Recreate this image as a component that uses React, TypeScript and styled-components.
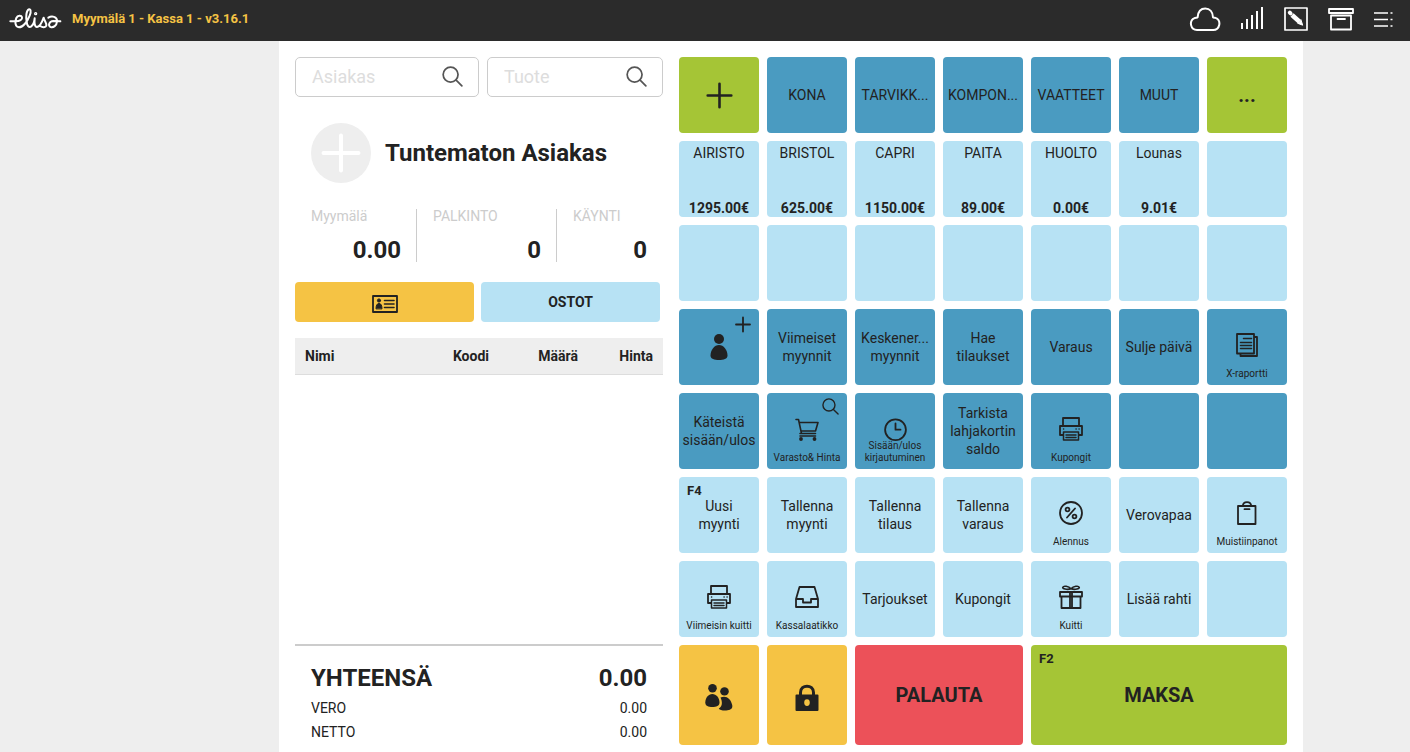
import React from "react";
import styled, { createGlobalStyle, css } from "styled-components";

const colors = {
  ink: "#222222",
  green: "#a5c536",
  blue: "#4a9bc1",
  sky: "#b7e2f4",
  yellow: "#f5c344",
  red: "#ec5159",
  bar: "#2b2b2b",
  page: "#eeeeee",
  line: "#cccccc",
};

const GlobalStyle = createGlobalStyle`
  *, *::before, *::after { box-sizing: border-box; }
  body {
    margin: 0;
    background: ${colors.page};
    color: ${colors.ink};
    font-family: Roboto, "Liberation Sans", sans-serif;
    font-size: 14px;
    line-height: 18px;
  }
  button, input { font: inherit; color: inherit; }
  button { border: 0; padding: 0; cursor: pointer; background: none; }
  svg { display: block; flex: none; }
`;

/* ---------- icons ---------- */

type IconProps = { w?: number; h?: number; box: string; sw?: number; children: React.ReactNode };

const Icon = ({ w = 24, h = 24, box, sw = 2, children }: IconProps) => (
  <svg
    width={w}
    height={h}
    viewBox={box}
    fill="none"
    stroke="currentColor"
    strokeWidth={sw}
    strokeLinecap="round"
    strokeLinejoin="round"
    aria-hidden="true"
  >
    {children}
  </svg>
);

const Logo = () => (
  <svg width="53" height="23" viewBox="28 16 159 69" fill="none" stroke="#fff" strokeWidth="6" strokeLinecap="round" strokeLinejoin="round" role="img" aria-label="elisa">
    <path d="M32 59H48C60 59 69 54 67 47C65 40 54 41 50 49C45 60 46 76 58 77C70 77 83 60 90 42C96 27 92 21 87 23C80 27 78 45 81 60C82 73 88 79 95 74C101 69 104 60 105 50C104 62 104 76 112 76C121 75 127 62 132 48C134 58 142 65 140 72C138 78 128 78 123 74" />
    <path d="M146 48C156 42 173 44 172 59C171 73 161 78 153 76C144 73 148 59 161 58L182 59" />
    <circle cx="108" cy="36" r="2" />
  </svg>
);

const CloudIcon = () => (
  <Icon w={32} h={24} box="0 0 32 24">
    <path d="M8 23h16a6.300 6.300 0 0 0 2.500-12.100C26 10.500 24.400 11 24 10.300C23.800 5 20.800 1.500 16.300 1.500S9 5 8.600 10.300C8.200 11 6.500 10.600 5.500 11.200A6.200 6.200 0 0 0 8 23z" />
  </Icon>
);

const SignalIcon = () => (
  <Icon w={23} h={24} box="0 1 23 24">
    <path strokeLinecap="butt" d="M1 23v-6M6 23v-10M11 23V9M16 23V5M21 23V1" />
  </Icon>
);

const EditIcon = () => (
  <Icon box="0 0 24 24">
    <rect x="1" y="1" width="22" height="22" strokeWidth="1.700" />
    <path d="M5.800 5.600l.8.8" strokeWidth="4" />
    <path d="M8 8l7.500 6.700" strokeWidth="4.600" strokeLinecap="butt" />
    <path d="M14 16.400l4.700 1.800l-1.700-5.200z" fill="currentColor" strokeWidth="1" />
  </Icon>
);

const ArchiveIcon = () => (
  <Icon w={26} box="0 0 26 24" sw={1.8}>
    <path d="M1 2h24v4H1zM3 8.500h20V22.500H3zM9.500 12h7.500" />
  </Icon>
);

const MenuIcon = () => (
  <Icon w={19} h={16} box="0 0 19 16" sw={1.6}>
    <path strokeLinecap="butt" d="M0 2h14M0 8.500h14M0 15h14M16.500 2h2M16.500 8.500h2M16.500 15h2" />
  </Icon>
);

const SearchIcon = ({ size = 21, sw = 1.8 }: { size?: number; sw?: number }) => (
  <Icon w={size} h={size} box="0 0 22 22" sw={sw}>
    <circle cx="9" cy="9" r="7.800" />
    <path d="M14.800 14.800L20.800 20.800" />
  </Icon>
);

const PlusIcon = ({ size, sw }: { size: number; sw: number }) => (
  <Icon w={size} h={size} box="0 0 24 24" sw={sw}>
    <path d="M12 1.500v21M1.500 12h21" />
  </Icon>
);

const CornerPlusIcon = () => (
  <Icon w={16} h={20} box="0 0 16 20" sw={1.8}>
    <path d="M8 3.500v14M1 10.500h14" />
  </Icon>
);

const CardIcon = () => (
  <Icon w={26} h={22} box="0 -4 26 22" sw={1.8}>
    <rect x="1" y="1" width="24" height="16" />
    <circle cx="7" cy="5.500" r="1.600" fill="currentColor" strokeWidth="1" />
    <path d="M4 13.500c0-3 1-5 3-5s3 2 3 5z" fill="currentColor" strokeWidth="1" />
    <path d="M12.500 5.500h9.500M12.500 9h9.500M12.500 12.500h9.500" strokeWidth="1.600" />
  </Icon>
);

const PersonIcon = () => (
  <Icon w={20} h={28} box="0 0 20 28" sw={0}>
    <circle cx="10" cy="6" r="5" fill="currentColor" />
    <path d="M10 12c4.500 0 8.500 5 8.500 10.500c0 3.500-4 4.500-8.500 4.500s-8.500-1-8.500-4.500C1.500 17 5.500 12 10 12z" fill="currentColor" />
  </Icon>
);

const PeopleIcon = () => (
  <Icon w={28} h={32} box="0 -5 28 32" sw={0}>
    <g fill="currentColor">
      <ellipse cx="7.500" cy="4.200" rx="4.300" ry="4.200" />
      <ellipse cx="19.500" cy="7.400" rx="4.300" ry="4.200" />
      <path d="M7.300 10c4 0 7.200 4 7.200 8.500c0 3.500-3.200 4.500-7.200 4.500S.3 22 .3 18.500C.3 14 3.500 10 7.300 10z" />
      <path d="M15.500 13.600c5-2.500 10.200.5 11.700 7.400c1 4.500-3.400 5.500-7.200 5.500c-3 0-5.500-.5-6.200-2c3.400-1.500 4-6 1.700-10.900z" />
    </g>
  </Icon>
);

const LockIcon = () => (
  <Icon w={26} h={32} box="0 -5 26 32" sw={3}>
    <path d="M6.500 12V8.500C6.500 0 19.500 0 19.500 8.500V12" />
    <path d="M2.500 10.500h21q1 0 1 1V26q0 1-1 1h-21q-1 0-1-1V11.500q0-1 1-1zM13 15.200a2.800 3.400 0 1 0 0 6.800a2.800 3.400 0 1 0 0-6.800z" fill="currentColor" fillRule="evenodd" stroke="none" />
  </Icon>
);

const CartIcon = () => (
  <Icon box="0 -1 24 24">
    <path d="M1 1.500h2.500L6.500 15.500M4.300 4.500h18.700l-2.500 8.500H6M5 15.500h15.500M5 18h15.500" strokeWidth="1.600" />
    <circle cx="6" cy="21" r=".9" />
    <circle cx="19.500" cy="21" r=".9" />
  </Icon>
);

const ClockIcon = () => (
  <Icon box="0 0 24 24" sw={1.8}>
    <circle cx="12.500" cy="12.700" r="10.400" />
    <path d="M12.500 6.500v6.200h5" />
  </Icon>
);

const PrinterIcon = () => (
  <Icon box="0 0 24 24" sw={1.8}>
    <path d="M4 9V1h16v8M4 18H1V9h22v9h-3" />
    <path d="M4.500 15h15v8h-15zM7 18h10M7 20.500h10" strokeWidth="1.500" />
    <path d="M4.500 12h.2M17 12h.2M20 12h.2" strokeWidth="1.400" />
  </Icon>
);

const ReportIcon = () => (
  <Icon box="0 0 24 24" sw={1.8}>
    <path d="M2 1h17v19.500H2zM5.500 20.500v2.500h16.500V4h-3" />
    <path d="M8.500 5.500h8M5.500 9.500h11M5.500 12.500h11M5.500 15.500h11" strokeWidth="1.500" />
  </Icon>
);

const PercentIcon = () => (
  <Icon box="0 0 24 24" sw={1.8}>
    <circle cx="12" cy="12" r="11" />
    <circle cx="8.500" cy="8.500" r="1.900" />
    <circle cx="15.500" cy="15.500" r="1.900" />
    <path d="M16 7.500L8 16.500" />
  </Icon>
);

const BagIcon = () => (
  <Icon box="0 0 24 24" sw={1.8}>
    <path d="M3 5h17.500v18H3zM7.800 5C8 -.3 16 -.3 16.200 5M9.500 8.200h5" />
  </Icon>
);

const TrayIcon = () => (
  <Icon box="0 0 24 24" sw={1.8}>
    <path d="M4.500 2h15L23 14v8H1v-8zM1 14h7v3.500h8V14h7" />
  </Icon>
);

const GiftIcon = () => (
  <Icon box="0 0 24 24" sw={1.8}>
    <path d="M1 7h22v4.500H1zM2.500 11.500V23h19V11.500M11 7v16M13 7v16" />
    <path d="M12 3.800C9.500 1 4.500.5 3.800 2.200S8 5 12 3.800zM12 3.800c2.500-2.800 7.500-3.300 8.200-1.600S16 5 12 3.800z" strokeWidth="1.600" />
  </Icon>
);

/* ---------- page frame ---------- */

const TopBar = styled.header`
  display: flex;
  align-items: center;
  height: 41px;
  padding: 0 17px 4px 9px;
  background: ${colors.bar};
  color: #fff;
`;

const StoreTitle = styled.h1`
  margin: 0 0 0 10px;
  flex: 1;
  font-size: 13px;
  line-height: 18px;
  font-weight: 700;
  color: ${colors.yellow};
`;

const BarActions = styled.nav`
  display: flex;
  align-items: center;
  gap: 20px;
`;

const PageGrid = styled.div`
  display: grid;
  grid-template-columns: 279fr minmax(auto, 1024px) 107fr;
  min-height: calc(100vh - 41px);
`;

const Register = styled.main`
  grid-column: 2;
  display: flex;
  gap: 16px;
  padding: 16px 16px 0;
  background: #fff;
`;

/* ---------- receipt column ---------- */

const Receipt = styled.section`
  flex: 1;
  min-width: 0;
  display: flex;
  flex-direction: column;
`;

const SearchRow = styled.div`
  display: grid;
  grid-template-columns: 184fr 176fr;
  gap: 8px;
`;

const SearchBox = styled.label`
  min-width: 0;
  display: flex;
  align-items: center;
  height: 40px;
  padding: 0 15px 2px 16px;
  border: 1px solid ${colors.line};
  border-radius: 5px;
  color: #555;
`;

const SearchInput = styled.input`
  flex: 1;
  min-width: 0;
  width: 0;
  padding: 2px 0 0;
  border: 0;
  outline: 0;
  background: none;
  font-size: 18px;
  line-height: 24px;
  &::placeholder { color: #dddddd; opacity: 1; }
`;

const Customer = styled.div`
  display: flex;
  align-items: center;
  gap: 14px;
  margin-top: 26px;
  padding: 0 16px;
`;

const Avatar = styled.button`
  display: grid;
  place-items: center;
  width: 60px;
  height: 60px;
  border-radius: 50%;
  background: ${colors.page};
  color: #fff;
`;

const CustomerName = styled.h2`
  margin: 0;
  font-size: 24px;
  line-height: 30px;
  font-weight: 700;
`;

const Stats = styled.dl`
  display: grid;
  grid-template-columns: 122fr 140fr 106fr;
  margin: 26px 0 20px;
`;

const Stat = styled.div`
  height: 53px;
  padding: 0 16px;
  & + & { box-shadow: -1px 0 0 ${colors.line}; }
`;

const StatLabel = styled.dt`
  line-height: 14px;
  color: ${colors.line};
`;

const StatValue = styled.dd`
  margin: 12px 0 0;
  font-size: 24px;
  line-height: 30px;
  font-weight: 700;
  text-align: right;
`;

const ButtonRow = styled.div`
  display: flex;
  gap: 7px;
  padding-right: 3px;
`;

const WideButton = styled.button<{ $tone: string }>`
  flex: 1;
  display: grid;
  place-items: center;
  height: 40px;
  border-radius: 4px;
  background: ${(p) => p.$tone};
  font-weight: 700;
`;

const Basket = styled.table`
  width: 100%;
  margin-top: 16px;
  border-collapse: collapse;
`;

const BasketHead = styled.th<{ $width: string; $right?: boolean }>`
  width: ${(p) => p.$width};
  height: 36px;
  padding: 0 10px;
  text-align: ${(p) => (p.$right ? "right" : "left")};
  font-weight: 700;
  background: ${colors.page};
  border-bottom: 1px solid #dddddd;
`;

const Totals = styled.dl`
  margin: auto 0 0;
  padding: 14px 16px 8px;
  border-top: 2px solid ${colors.line};
`;

const TotalRow = styled.div<{ $main?: boolean }>`
  display: flex;
  justify-content: space-between;
  line-height: 24px;
  ${(p) => p.$main && css`
    font-size: 24px;
    line-height: 36px;
    font-weight: 700;
  `}
`;

const Amount = styled.dd`
  margin: 0;
`;

/* ---------- key pad ---------- */

const Keypad = styled.section`
  display: grid;
  grid-template-columns: repeat(7, 80px);
  grid-template-rows: repeat(7, 76px) 100px;
  gap: 8px;
  padding-bottom: 7px;
`;

const Key = styled.button<{ $tone: string; $span?: number; $layout?: "price" | "icon" }>`
  position: relative;
  grid-column: span ${(p) => p.$span ?? 1};
  display: flex;
  flex-direction: column;
  align-items: center;
  justify-content: ${(p) => (p.$layout ? "space-between" : "center")};
  padding: ${(p) => (p.$layout === "price" ? "3px 0 0" : p.$layout === "icon" ? "24px 0 4px" : "0")};
  border-radius: 4px;
  background: ${(p) => p.$tone};
  white-space: pre-line;
  text-align: center;
`;

const Price = styled.strong`
  font-weight: 700;
`;

const Caption = styled.span`
  margin: -1px 0 1px;
  font-size: 10px;
  line-height: 12px;
`;

const BigLabel = styled.span`
  font-size: 20px;
  line-height: 24px;
  font-weight: 700;
`;

const Corner = styled.span`
  position: absolute;
  top: 5px;
  right: 8px;
`;

const Shortcut = styled.kbd`
  position: absolute;
  top: 5px;
  left: 8px;
  font-family: inherit;
  font-size: 13px;
  font-weight: 700;
`;

type KeySpec = {
  tone: string;
  label?: string;
  price?: string;
  icon?: React.ReactNode;
  caption?: string;
  corner?: React.ReactNode;
  shortcut?: string;
  big?: string;
  name?: string;
  span?: number;
};

const { green, blue, sky, yellow, red } = colors;

const keys: KeySpec[] = [
  { tone: green, icon: <PlusIcon size={27} sw={2.3} />, name: "Lisää" },
  { tone: blue, label: "KONA" },
  { tone: blue, label: "TARVIKK..." },
  { tone: blue, label: "KOMPON..." },
  { tone: blue, label: "VAATTEET" },
  { tone: blue, label: "MUUT" },
  { tone: green, big: "..." },

  { tone: sky, label: "AIRISTO", price: "1295.00€" },
  { tone: sky, label: "BRISTOL", price: "625.00€" },
  { tone: sky, label: "CAPRI", price: "1150.00€" },
  { tone: sky, label: "PAITA", price: "89.00€" },
  { tone: sky, label: "HUOLTO", price: "0.00€" },
  { tone: sky, label: "Lounas", price: "9.01€" },
  { tone: sky },

  ...Array.from({ length: 7 }, () => ({ tone: sky })),

  { tone: blue, icon: <PersonIcon />, corner: <CornerPlusIcon />, name: "Uusi asiakas" },
  { tone: blue, label: "Viimeiset\nmyynnit" },
  { tone: blue, label: "Keskener...\nmyynnit" },
  { tone: blue, label: "Hae\ntilaukset" },
  { tone: blue, label: "Varaus" },
  { tone: blue, label: "Sulje päivä" },
  { tone: blue, icon: <ReportIcon />, caption: "X-raportti" },

  { tone: blue, label: "Käteistä\nsisään/ulos" },
  { tone: blue, icon: <CartIcon />, caption: "Varasto& Hinta", corner: <SearchIcon size={17} /> },
  { tone: blue, icon: <ClockIcon />, caption: "Sisään/ulos\nkirjautuminen" },
  { tone: blue, label: "Tarkista\nlahjakortin\nsaldo" },
  { tone: blue, icon: <PrinterIcon />, caption: "Kupongit" },
  { tone: blue },
  { tone: blue },

  { tone: sky, label: "Uusi\nmyynti", shortcut: "F4" },
  { tone: sky, label: "Tallenna\nmyynti" },
  { tone: sky, label: "Tallenna\ntilaus" },
  { tone: sky, label: "Tallenna\nvaraus" },
  { tone: sky, icon: <PercentIcon />, caption: "Alennus" },
  { tone: sky, label: "Verovapaa" },
  { tone: sky, icon: <BagIcon />, caption: "Muistiinpanot" },

  { tone: sky, icon: <PrinterIcon />, caption: "Viimeisin kuitti" },
  { tone: sky, icon: <TrayIcon />, caption: "Kassalaatikko" },
  { tone: sky, label: "Tarjoukset" },
  { tone: sky, label: "Kupongit" },
  { tone: sky, icon: <GiftIcon />, caption: "Kuitti" },
  { tone: sky, label: "Lisää rahti" },
  { tone: sky },

  { tone: yellow, icon: <PeopleIcon />, name: "Asiakkaat" },
  { tone: yellow, icon: <LockIcon />, name: "Lukitse" },
  { tone: red, big: "PALAUTA", span: 2 },
  { tone: green, big: "MAKSA", span: 3, shortcut: "F2" },
];

const KeyButton = ({ spec }: { spec: KeySpec }) => (
  <Key
    type="button"
    aria-label={spec.name}
    $tone={spec.tone}
    $span={spec.span}
    $layout={spec.price ? "price" : spec.caption ? "icon" : undefined}
  >
    {spec.shortcut && <Shortcut>{spec.shortcut}</Shortcut>}
    {spec.corner && <Corner>{spec.corner}</Corner>}
    {spec.icon}
    {spec.label && <span>{spec.label}</span>}
    {spec.big && <BigLabel>{spec.big}</BigLabel>}
    {spec.price && <Price>{spec.price}</Price>}
    {spec.caption && <Caption>{spec.caption}</Caption>}
  </Key>
);

export default function App() {
  return (
    <>
      <GlobalStyle />
      <TopBar>
        <Logo />
        <StoreTitle>Myymälä 1 - Kassa 1 - v3.16.1</StoreTitle>
        <BarActions>
          <button type="button" aria-label="Pilvi"><CloudIcon /></button>
          <button type="button" aria-label="Yhteys"><SignalIcon /></button>
          <button type="button" aria-label="Muokkaa"><EditIcon /></button>
          <button type="button" aria-label="Arkisto"><ArchiveIcon /></button>
          <button type="button" aria-label="Valikko"><MenuIcon /></button>
        </BarActions>
      </TopBar>
      <PageGrid>
        <Register>
          <Receipt>
            <SearchRow>
              <SearchBox>
                <SearchInput type="text" placeholder="Asiakas" aria-label="Asiakas" />
                <SearchIcon />
              </SearchBox>
              <SearchBox>
                <SearchInput type="text" placeholder="Tuote" aria-label="Tuote" />
                <SearchIcon />
              </SearchBox>
            </SearchRow>
            <Customer>
              <Avatar type="button" aria-label="Lisää asiakas"><PlusIcon size={40} sw={2.4} /></Avatar>
              <CustomerName>Tuntematon Asiakas</CustomerName>
            </Customer>
            <Stats>
              <Stat><StatLabel>Myymälä</StatLabel><StatValue>0.00</StatValue></Stat>
              <Stat><StatLabel>PALKINTO</StatLabel><StatValue>0</StatValue></Stat>
              <Stat><StatLabel>KÄYNTI</StatLabel><StatValue>0</StatValue></Stat>
            </Stats>
            <ButtonRow>
              <WideButton type="button" aria-label="Asiakaskortti" $tone={yellow}><CardIcon /></WideButton>
              <WideButton type="button" $tone={sky}>OSTOT</WideButton>
            </ButtonRow>
            <Basket>
              <thead>
                <tr>
                  <BasketHead $width="auto">Nimi</BasketHead>
                  <BasketHead $width="100px" $right>Koodi</BasketHead>
                  <BasketHead $width="89px" $right>Määrä</BasketHead>
                  <BasketHead $width="75px" $right>Hinta</BasketHead>
                </tr>
              </thead>
            </Basket>
            <Totals>
              <TotalRow $main><dt>YHTEENSÄ</dt><Amount>0.00</Amount></TotalRow>
              <TotalRow><dt>VERO</dt><Amount>0.00</Amount></TotalRow>
              <TotalRow><dt>NETTO</dt><Amount>0.00</Amount></TotalRow>
            </Totals>
          </Receipt>
          <Keypad>
            {keys.map((spec, i) => <KeyButton key={i} spec={spec} />)}
          </Keypad>
        </Register>
      </PageGrid>
    </>
  );
}
